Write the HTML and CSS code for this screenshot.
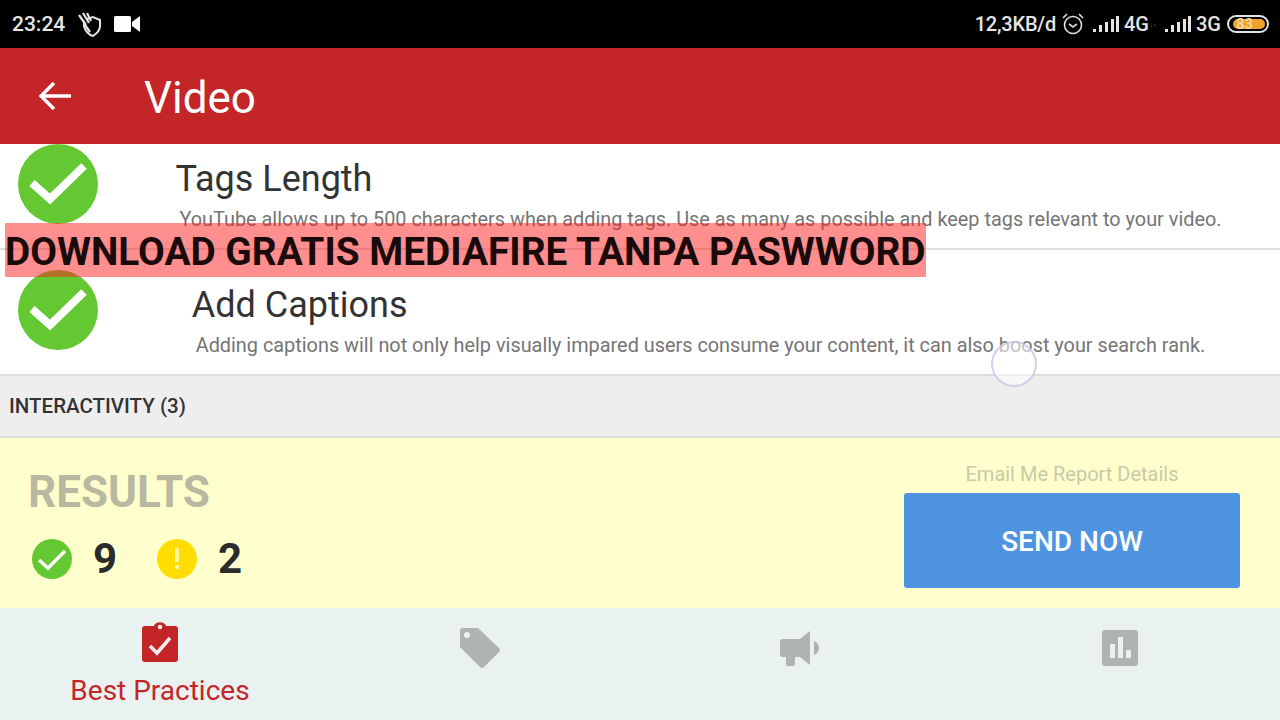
FILE: index.html
```html
<!DOCTYPE html>
<html>
	<head>
		<link rel="stylesheet" href="styles.css">
	</head>
	<body>
	<div class="screen">

		<div class="statusbar">
			<div class="status-left">
				<span class="clock">23:24</span>
				<svg class="icon-shield" width="26" height="26" viewBox="0 0 26 26">
					<path d="M11 8 L17 6 L24 9 V15 C24 20 20 23 17 25 C13 24 9 20 8 15 V10" fill="none" stroke="#e4e4e4" stroke-width="2"/>
					<path d="M3 4 L10 14 M7 2 L13 12 M11 2 L15 10 M9 14 L14 21" stroke="#e4e4e4" stroke-width="2.2" fill="none"/>
				</svg>
				<svg width="26" height="18" viewBox="0 0 26 18">
					<rect x="0" y="1" width="17" height="16" rx="1.5" fill="#fff"/>
					<path d="M18 7 L26 1 V17 L18 11 Z" fill="#fff"/>
				</svg>
			</div>
			<div class="status-right">
				<span class="speed">12,3KB/d</span>
				<svg class="icon-alarm" width="22" height="22" viewBox="0 0 22 22">
					<circle cx="11" cy="12" r="8.5" fill="none" stroke="#ddd" stroke-width="1.6"/>
					<path d="M7 11 L11 14 L15 11" fill="none" stroke="#ddd" stroke-width="1.6"/>
					<path d="M1 5 L5 1 M21 5 L17 1" stroke="#ddd" stroke-width="1.6"/>
				</svg>
				<svg class="icon-signal" width="26" height="18" viewBox="0 0 26 18">
					<rect x="0" y="14" width="3" height="3" fill="#e4e4e4"/>
					<rect x="6" y="10" width="3" height="7" fill="#e4e4e4"/>
					<rect x="12" y="7" width="3" height="10" fill="#e4e4e4"/>
					<rect x="18" y="4" width="3" height="13" fill="#e4e4e4"/>
					<rect x="23" y="1" width="3" height="16" fill="#e4e4e4"/>
				</svg>
				<span class="net">4G</span>
				<span class="net-arrows">↓↑</span>
				<svg class="icon-signal" width="26" height="18" viewBox="0 0 26 18">
					<rect x="0" y="14" width="3" height="3" fill="#e4e4e4"/>
					<rect x="6" y="10" width="3" height="7" fill="#e4e4e4"/>
					<rect x="12" y="7" width="3" height="10" fill="#e4e4e4"/>
					<rect x="18" y="4" width="3" height="13" fill="#e4e4e4"/>
					<rect x="23" y="1" width="3" height="16" fill="#e4e4e4"/>
				</svg>
				<span class="net">3G</span>
				<div class="battery"><div class="battery-level">83</div></div>
			</div>
		</div>

		<div class="appbar">
			<svg width="36" height="36" viewBox="0 0 36 36">
				<path d="M34 18 H5 M17 5 L4 18 L17 31" fill="none" stroke="#fff" stroke-width="3.4"/>
			</svg>
			<span class="appbar-title">Video</span>
		</div>

		<div class="list">
			<div class="row row-first">
				<svg class="row-icon" width="80" height="80" viewBox="0 0 80 80">
					<circle cx="40" cy="40" r="40" fill="#64c832"/>
					<path d="M14 39 L32 55 L66 22" fill="none" stroke="#fff" stroke-width="8"/>
				</svg>
				<div class="row-body">
					<div class="row-text">
						<div class="row-title">Tags Length</div>
						<div class="row-desc">YouTube allows up to 500 characters when adding tags. Use as many as possible and keep tags relevant to your video.</div>
					</div>
				</div>
			</div>
			<div class="row">
				<svg class="row-icon" width="80" height="80" viewBox="0 0 80 80">
					<circle cx="40" cy="40" r="40" fill="#64c832"/>
					<path d="M14 39 L32 55 L66 22" fill="none" stroke="#fff" stroke-width="8"/>
				</svg>
				<div class="row-body">
					<div class="row-text">
						<div class="row-title">Add Captions</div>
						<div class="row-desc">Adding captions will not only help visually impared users consume your content, it can also boost your search rank.</div>
					</div>
				</div>
			</div>
			<div class="section">INTERACTIVITY (3)</div>
		</div>

		<div class="results">
			<div class="results-left">
				<div class="results-title">RESULTS</div>
				<div class="counts">
					<svg width="40" height="40" viewBox="0 0 40 40">
						<circle cx="20" cy="20" r="20" fill="#64c832"/>
						<path d="M7 21 L16 29 L33 12" fill="none" stroke="#fff" stroke-width="3.5"/>
					</svg>
					<span class="count">9</span>
					<svg class="count-warn" width="40" height="40" viewBox="0 0 40 40">
						<circle cx="20" cy="20" r="20" fill="#ffdd00"/>
						<rect x="18" y="9" width="4" height="14" fill="#fff3a0"/>
						<rect x="18" y="26" width="4" height="4" fill="#fff3a0"/>
					</svg>
					<span class="count">2</span>
				</div>
			</div>
			<div class="results-right">
				<div class="email-label">Email Me Report Details</div>
				<div class="send-btn">SEND NOW</div>
			</div>
		</div>

		<div class="tabbar">
			<div class="tab tab-active">
				<svg class="tab-icon-first" width="36" height="40" viewBox="0 0 36 40">
					<path d="M3 4 H12 C13 -1 23 -1 24 4 H33 Q36 4 36 7 V37 Q36 40 33 40 H3 Q0 40 0 37 V7 Q0 4 3 4 Z" fill="#c42628"/>
					<circle cx="18" cy="5" r="2.2" fill="#e9f1f1"/>
					<path d="M8 24 L15 31 L28 16" fill="none" stroke="#f6eaea" stroke-width="3.6"/>
				</svg>
				<span class="tab-label">Best Practices</span>
			</div>
			<div class="tab">
				<svg class="tab-icon" width="40" height="40" viewBox="0 0 40 40">
					<path d="M3 0 H18 L39 20 Q41 22 39 24 L24 39 Q22 41 20 39 L0 19 V3 Q0 0 3 0 Z" fill="#aeb3b3"/>
					<circle cx="7" cy="7" r="3" fill="#e9f1f1"/>
				</svg>
			</div>
			<div class="tab">
				<svg class="tab-icon tab-icon-low" width="40" height="36" viewBox="0 0 40 36">
					<path d="M2 9 H20 L30 1 V35 L20 27 H15 V34 Q15 36 13 36 H8 Q6 36 6 34 V27 H2 Q0 27 0 25 V11 Q0 9 2 9 Z" fill="#aeb3b3"/>
					<path d="M34 11 Q39 13 39 18 Q39 23 34 25 Z" fill="#aeb3b3"/>
				</svg>
			</div>
			<div class="tab">
				<svg class="tab-icon tab-icon-low" width="36" height="36" viewBox="0 0 36 36">
					<rect width="36" height="36" rx="3" fill="#aeb3b3"/>
					<rect x="8" y="14" width="5" height="14" fill="#e9f1f1"/>
					<rect x="16" y="7" width="5" height="21" fill="#e9f1f1"/>
					<rect x="24" y="20" width="5" height="8" fill="#e9f1f1"/>
				</svg>
			</div>
		</div>

		<div class="banner">DOWNLOAD GRATIS MEDIAFIRE TANPA PASWWORD</div>
		<div class="touch-ring"></div>
	</div>
	</body>
</html>
```

FILE: styles.css
```css
body {
	margin: 0;
	font-family: Roboto, "Liberation Sans", sans-serif;
	background-color: white;
	color: #333;
}

.screen {
	position: relative;
	width: 1280px;
	height: 720px;
	overflow: hidden;
	display: flex;
	flex-direction: column;
}

/* status bar */
.statusbar {
	height: 48px;
	flex: none;
	background-color: black;
	color: #e4e4e4;
	display: flex;
	align-items: center;
	justify-content: space-between;
	padding: 0 11px 0 12px;
	font-size: 20px;
	font-weight: 500;
}
.status-left {
	display: flex;
	align-items: center;
}
.clock {
	font-size: 21px;
	margin-right: 11px;
}
.icon-shield {
	margin-right: 12px;
}
.status-right {
	display: flex;
	align-items: center;
}
.speed {
	letter-spacing: -0.2px;
}
.icon-alarm {
	margin: 0 9px 0 6px;
}
.icon-signal {
	margin-right: 5px;
}
.net {
	width: 26px;
}
.net-arrows {
	width: 15px;
	font-size: 6px;
	color: #777;
}
.battery {
	margin-left: 5px;
	width: 42px;
	height: 18px;
	box-sizing: border-box;
	border: 2px solid #e4e4e4;
	border-radius: 9px;
	padding: 2px;
	padding-left: 4px;
	display: flex;
}
.battery-level {
	width: 100%;
	background-color: #f0a22e;
	border-radius: 5px;
	color: #f7dca0;
	font-size: 15px;
	line-height: 11px;
	padding-left: 3px;
}

/* app bar */
.appbar {
	height: 96px;
	flex: none;
	background-color: #c42628;
	color: white;
	display: flex;
	align-items: center;
	padding-left: 37px;
}
.appbar-title {
	margin: 4px 0 0 71px;
	font-size: 44px;
}

/* list */
.list {
	height: 294px;
	flex: none;
	overflow: hidden;
}
.row {
	height: 126px;
	box-sizing: border-box;
	border-bottom: 2px solid #ddd;
	display: flex;
	padding: 20px 0 0 18px;
	background-color: white;
}
.row-first {
	margin-top: -20px;
}
.row-icon {
	flex: none;
}
.row-body {
	flex: 1;
	margin-left: 19px;
	display: flex;
	justify-content: center;
}
.row-title {
	font-size: 36px;
	line-height: 40px;
	margin-top: 15px;
	color: #333;
}
.row-desc {
	font-size: 19.88px;
	line-height: 24px;
	margin-top: 9px;
	padding-left: 4px;
	color: #757575;
	white-space: nowrap;
}
.section {
	height: 62px;
	box-sizing: border-box;
	border-bottom: 2px solid #ddd;
	background-color: #eeeeee;
	padding-left: 9px;
	font-size: 20.5px;
	font-weight: 500;
	line-height: 60px;
	color: #333;
}

/* results panel */
.results {
	flex: 1;
	background-color: #ffffcd;
	display: flex;
	justify-content: space-between;
	padding: 0 40px 0 28px;
}
.results-title {
	font-size: 44px;
	font-weight: 700;
	line-height: 50px;
	margin-top: 29px;
	color: #b9b9a1;
}
.counts {
	display: flex;
	align-items: center;
	margin: 17px 0 0 4px;
}
.count {
	font-size: 42px;
	font-weight: 700;
	margin-left: 21px;
	width: 24px;
	color: #2b2b2b;
}
.count-warn {
	margin-left: 40px;
}
.results-right {
	width: 336px;
	display: flex;
	flex-direction: column;
}
.email-label {
	height: 55px;
	box-sizing: border-box;
	padding-top: 24px;
	font-size: 20px;
	line-height: 24px;
	text-align: center;
	color: #c9caa6;
}
.send-btn {
	height: 95px;
	background-color: #4f94e0;
	border-radius: 3px;
	color: white;
	font-size: 28px;
	font-weight: 500;
	line-height: 97px;
	text-align: center;
}

/* bottom tabs */
.tabbar {
	height: 112px;
	flex: none;
	background-color: #e9f1f1;
	display: flex;
}
.tab {
	width: 320px;
	display: flex;
	flex-direction: column;
	align-items: center;
}
.tab-icon {
	margin-top: 20px;
}
.tab-icon-low {
	margin-top: 22px;
}
.tab-icon-first {
	margin-top: 14px;
}
.tab-label {
	font-size: 28px;
	line-height: 32px;
	margin-top: 13px;
}
.tab-active {
	color: #c42628;
}

/* overlays */
.banner {
	position: absolute;
	left: 5px;
	top: 223px;
	width: 921px;
	height: 54px;
	background-color: rgba(255, 30, 30, 0.5);
	color: #1a0a0a;
	font-size: 38.8px;
	font-weight: 700;
	line-height: 58px;
	white-space: nowrap;
}
.touch-ring {
	position: absolute;
	left: 991px;
	top: 341px;
	width: 46px;
	height: 46px;
	box-sizing: border-box;
	border: 2px solid rgba(190, 190, 225, 0.7);
	border-radius: 50%;
	background-color: rgba(255, 255, 255, 0.55);
}
```
